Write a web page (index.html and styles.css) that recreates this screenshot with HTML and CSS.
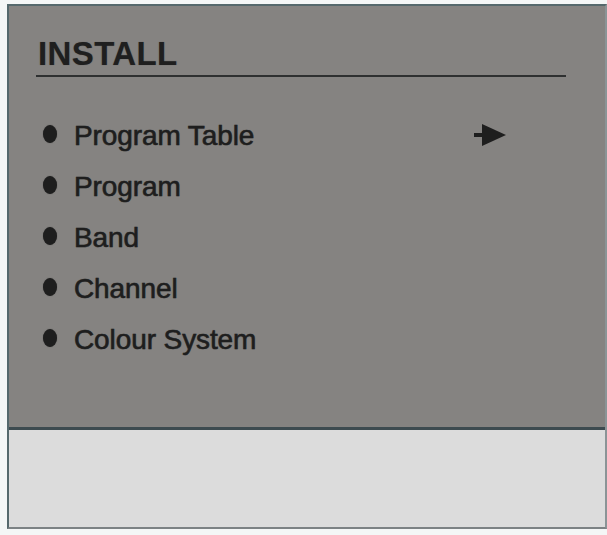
FILE: index.html
```html
<!DOCTYPE html>
<html lang="en">

<head>
    <meta charset="UTF-8">
    <meta name="viewport" content="width=device-width, initial-scale=1.0">
    <title>Install</title>
    <link rel="stylesheet" href="styles.css">
</head>

<body>
    <!-- OSD screen -->
    <div class="screen">
        <!-- menu area -->
        <div class="menu">
            <h1 class="menu-title">INSTALL</h1>
            <ul class="menu-list">
                <li class="menu-item">
                    <span class="dot"></span>
                    <span class="label">Program Table</span>
                    <svg class="arrow" width="33" height="24" viewBox="0 0 33 24">
                        <rect x="0" y="10" width="10" height="4" fill="#1e1e1e"/>
                        <polygon points="8,1 32,12 8,23" fill="#1e1e1e"/>
                    </svg>
                </li>
                <li class="menu-item"><span class="dot"></span><span class="label">Program</span></li>
                <li class="menu-item"><span class="dot"></span><span class="label">Band</span></li>
                <li class="menu-item"><span class="dot"></span><span class="label">Channel</span></li>
                <li class="menu-item"><span class="dot"></span><span class="label">Colour System</span></li>
            </ul>
        </div>

        <!-- help bar -->
        <div class="help"></div>
    </div>
</body>

</html>
```

FILE: styles.css
```css
/* page */
body {
    margin: 0;
    padding: 0;
    background-color: #f4f6f6;
    font-family: "Liberation Sans", Arial, sans-serif;
}

/* outer frame */
.screen {
    margin: 4px 0 0 7px;
    width: 596px;
    border: 2px solid #55686c;
    border-right-color: #8a9496;
    border-bottom-color: #7c8284;
}

/* grey menu area */
.menu {
    background-color: #858381;
    height: 391px;
    padding-top: 30px;
}

.menu-title {
    margin: 0 0 0 27px;
    width: 528px;
    padding: 0 0 3px 2px;
    font-size: 33px;
    line-height: 36px;
    font-weight: bold;
    letter-spacing: 0.4px;
    color: #1f1f1f;
    border-bottom: 2px solid #2e3030;
    text-shadow: 0 0 1px rgba(0, 0, 0, 0.35);
}

.menu-list {
    list-style: none;
    margin: 33px 0 0 0;
    padding: 0 0 0 34px;
}

.menu-item {
    display: flex;
    align-items: center;
    height: 51px;
    font-size: 28px;
    color: #1e1e1e;
    -webkit-text-stroke: 0.5px #1e1e1e;
    text-shadow: 0 0 1px rgba(0, 0, 0, 0.4);
}

.dot {
    width: 14px;
    height: 18px;
    border-radius: 50%;
    background-color: #1e1e1e;
    margin-right: 17px;
    margin-top: -3px;
    box-shadow: 0 0 1px rgba(0, 0, 0, 0.5);
}

.label {
    width: 400px;
    letter-spacing: -0.1px;
}

.arrow {
    margin-top: -2px;
}

/* light help bar */
.help {
    border-top: 3px solid #3d4b50;
    background-color: #dcdcdc;
    height: 97px;
}
```
